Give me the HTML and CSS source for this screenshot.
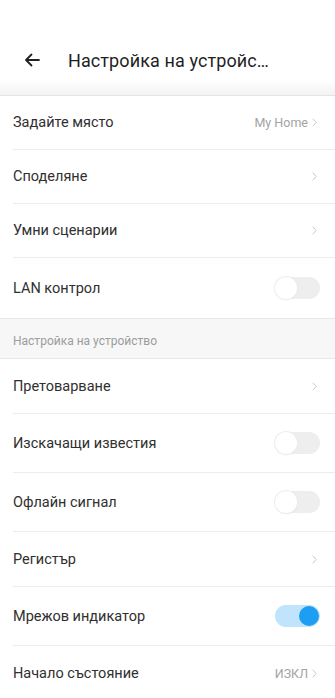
FILE: index.html
```html
<!DOCTYPE html>
<html lang="bg">
<head>
<meta charset="utf-8">
<link rel="stylesheet" href="styles.css">
</head>
<body>
<header class="header">
  <svg class="back" width="16" height="14" viewBox="0 0 16 14"><path d="M15 7H2M7.5 1.5L2 7l5.5 5.5" fill="none" stroke="#222" stroke-width="1.8" stroke-linecap="round" stroke-linejoin="round"/></svg>
  <h1 class="title">Настройка на устройството</h1>
</header>
<div class="shade"></div>
<section class="list first">
  <div class="row link"><span class="label">Задайте място</span><span class="value">My Home</span><svg class="chev" width="5" height="9" viewBox="0 0 5 9"><path d="M0.7 0.7L4.2 4.5 0.7 8.3" fill="none" stroke="#c8c8c8" stroke-width="1"/></svg></div>
  <div class="row link"><span class="label">Споделяне</span><svg class="chev" width="5" height="9" viewBox="0 0 5 9"><path d="M0.7 0.7L4.2 4.5 0.7 8.3" fill="none" stroke="#c8c8c8" stroke-width="1"/></svg></div>
  <div class="row link"><span class="label">Умни сценарии</span><svg class="chev" width="5" height="9" viewBox="0 0 5 9"><path d="M0.7 0.7L4.2 4.5 0.7 8.3" fill="none" stroke="#c8c8c8" stroke-width="1"/></svg></div>
  <div class="row sw"><span class="label">LAN контрол</span><span class="toggle"><span class="knob"></span></span></div>
</section>
<div class="section-title">Настройка на устройство</div>
<section class="list second">
  <div class="row link"><span class="label">Претоварване</span><svg class="chev" width="5" height="9" viewBox="0 0 5 9"><path d="M0.7 0.7L4.2 4.5 0.7 8.3" fill="none" stroke="#c8c8c8" stroke-width="1"/></svg></div>
  <div class="row sw"><span class="label">Изскачащи известия</span><span class="toggle"><span class="knob"></span></span></div>
  <div class="row sw"><span class="label">Офлайн сигнал</span><span class="toggle"><span class="knob"></span></span></div>
  <div class="row link"><span class="label">Регистър</span><svg class="chev" width="5" height="9" viewBox="0 0 5 9"><path d="M0.7 0.7L4.2 4.5 0.7 8.3" fill="none" stroke="#c8c8c8" stroke-width="1"/></svg></div>
  <div class="row sw"><span class="label">Мрежов индикатор</span><span class="toggle on"><span class="knob"></span></span></div>
  <div class="row link"><span class="label">Начало състояние</span><span class="value">ИЗКЛ</span><svg class="chev" width="5" height="9" viewBox="0 0 5 9"><path d="M0.7 0.7L4.2 4.5 0.7 8.3" fill="none" stroke="#c8c8c8" stroke-width="1"/></svg></div>
</section>
</body>
</html>
```
FILE: styles.css
```css
* { box-sizing: border-box; margin: 0; padding: 0; }
html, body { background: #fff; }
body {
  width: 335px;
  font-family: Roboto, "Noto Sans", sans-serif;
  color: #333;
  overflow: hidden;
}
.header {
  height: 82px;
  display: flex;
  align-items: center;
  padding: 38px 0 0 24px;
}
.back { flex: none; }
.title {
  margin-left: 28px;
  width: 202px;
  font-size: 18px;
  font-weight: 400;
  color: #1f1f1f;
  white-space: nowrap;
  overflow: hidden;
  text-overflow: ellipsis;
  letter-spacing: 0.1px;
}
.shade {
  height: 14px;
  background: linear-gradient(#fdfdfd, #f3f3f3);
  border-bottom: 1px solid #e4e4e4;
}
.row {
  display: flex;
  align-items: center;
  margin-left: 13px;
  padding-right: 18px;
  border-bottom: 1px solid #ececec;
  font-size: 14.5px;
  color: #303030;
}
.row.link { height: 54px; }
.second .row.link { height: 55px; }
.row.sw { height: 59px; padding-right: 15px; }
.first .row.sw { height: 60px; }
.list .row:last-child { border-bottom: none; }
.label { flex: 1; }
.value {
  font-size: 12.5px;
  color: #a3a3a3;
  margin-right: 4px;
}
.chev { flex: none; }
.toggle {
  position: relative;
  width: 45px;
  height: 22px;
  border-radius: 11px;
  background: #eeeeee;
}
.knob {
  position: absolute;
  left: 0;
  top: 0;
  width: 22px;
  height: 22px;
  border-radius: 50%;
  background: #fff;
  box-shadow: 0 0 0 1px #ececec, 0 1px 2px rgba(0,0,0,0.06);
}
.toggle.on { background: #bfe4fb; }
.toggle.on .knob {
  left: auto;
  right: 1px;
  top: 1px;
  width: 20px;
  height: 20px;
  background: #1e9ef2;
  box-shadow: none;
}
.section-title {
  height: 41px;
  display: flex;
  align-items: center;
  padding: 5px 0 0 13px;
  background: #f7f7f7;
  border-top: 1px solid #e8e8e8;
  border-bottom: 1px solid #e8e8e8;
  font-size: 12px;
  color: #9c9c9c;
}
```
